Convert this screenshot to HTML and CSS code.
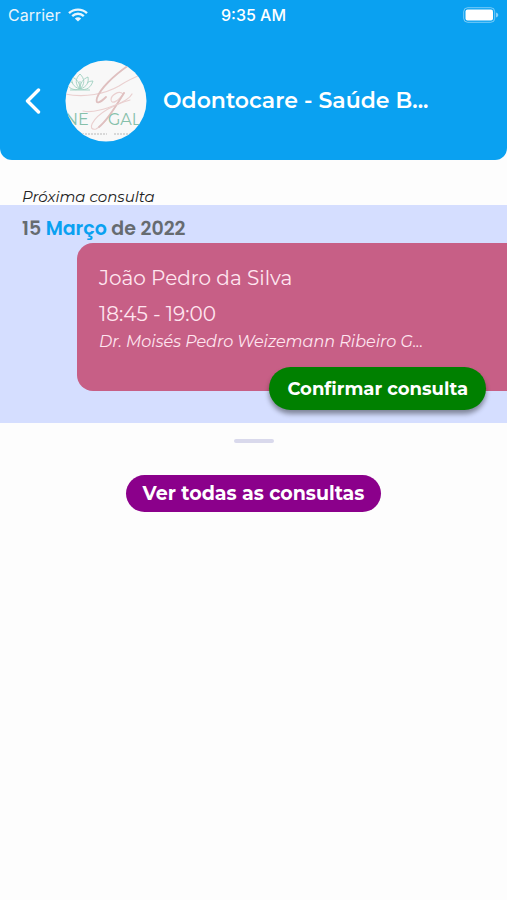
FILE: index.html
```html
<!DOCTYPE html>
<html lang="pt-BR">
<head>
    <meta charset="UTF-8">
    <meta name="viewport" content="width=device-width, initial-scale=1.0">
    <title>Odontocare</title>
    <link rel="stylesheet" href="styles.css">
</head>
<body>
    <header class="header">
        <div class="status-bar">
            <div class="carrier">
                <span>Carrier</span>
                <svg class="wifi" width="20" height="14" viewBox="0 0 20 14" aria-hidden="true">
                    <path d="M1 5.2C6 .4 14 .4 19 5.2" />
                    <path d="M4.2 8.2C7.6 5 12.4 5 15.8 8.2" />
                    <path class="wifi-dot" d="M10 13.6L6.8 10.4C8.6 8.8 11.4 8.8 13.2 10.4Z" />
                </svg>
            </div>
            <span class="clock">9:35 AM</span>
            <svg class="battery" width="36" height="16" viewBox="0 0 36 16" aria-hidden="true">
                <rect class="battery-case" x=".7" y=".7" width="31" height="14.6" rx="4" />
                <rect x="2.5" y="2.5" width="27.5" height="11" rx="2" fill="#fff" />
                <path d="M33 5.5C36 6.5 36 9.5 33 10.5Z" fill="#fff" opacity=".5" />
            </svg>
        </div>
        <div class="clinic">
            <button class="back" type="button" aria-label="Voltar">
                <svg width="16" height="26" viewBox="0 0 16 26"><path d="M13.5 2L2.5 13L13.5 24" /></svg>
            </button>
            <!-- Logo da clínica -->
            <svg class="logo" width="82" height="82" viewBox="0 0 82 82" aria-hidden="true">
                <defs>
                    <clipPath id="circulo"><circle cx="41" cy="41" r="40.5" /></clipPath>
                </defs>
                <g clip-path="url(#circulo)">
                    <rect width="82" height="82" fill="#f8f8f8" />
                    <g class="lotus">
                        <path d="M15 29C10 24 10 19 15 14C20 19 20 24 15 29Z" />
                        <path d="M15 29C8 27 6 22 7 17C12 19 15 23 15 29C15 23 18 19 23 17C24 22 22 27 15 29Z" />
                        <path d="M15 29C8 31 3 28 1 22C4 21 6 22 8 23M15 29C22 31 26 27 28 21C25 21 23 22 22 23" />
                        <path d="M15 21V29M5 30H25" />
                    </g>
                    <g class="script">
                        <path d="M0 34C20 38 40 34 54 26C63 20 70 17 78 14" />
                        <path d="M64 5C48 16 35 29 32 38C30 45 35 43 41 37" class="stroke-thick" />
                        <path d="M58 34C54 30 46 35 46 40C47 45 53 41 59 33" />
                        <path d="M59 33C51 45 42 63 31 69C22 71 26 59 43 49C55 43 64 40 67 34" />
                        <path d="M59 33C51 46 43 60 34 67" class="stroke-thick" />
                        <path d="M18 51C32 54 51 44 65 40" />
                    </g>
                    <text class="logo-name" x="0" y="65">NE</text>
                    <text class="logo-name" x="43" y="65">GAL</text>
                    <path class="tagline" d="M17 74H42M49 74H65" />
                </g>
            </svg>
            <h1 class="clinic-name">Odontocare - Saúde B...</h1>
        </div>
    </header>

    <main class="content">
        <p class="section-label">Próxima consulta</p>
        <section class="next">
            <h2 class="date">15 <span class="month">Março</span> de 2022</h2>
            <div class="card">
                <p class="patient">João Pedro da Silva</p>
                <p class="time">18:45 - 19:00</p>
                <p class="doctor">Dr. Moisés Pedro Weizemann Ribeiro G...</p>
            </div>
            <button class="confirm" type="button">Confirmar consulta</button>
        </section>
        <div class="handle"></div>
        <button class="see-all" type="button">Ver todas as consultas</button>
    </main>
</body>
</html>
```

FILE: styles.css
```css
* {
    box-sizing: border-box;
}
body {
    margin: 0;
    background-color: #fdfdfd;
    font-family: Montserrat, Inter, sans-serif;
}
h1, h2, p {
    margin: 0;
}
button {
    border: none;
    font-family: inherit;
    color: white;
    cursor: pointer;
}
.header {
    background-color: #0aa1f1;
    color: white;
    border-radius: 0 0 12px 12px;
    padding-bottom: 18px;
}
.status-bar {
    display: grid;
    grid-template-columns: 1fr auto 1fr;
    align-items: center;
    height: 30px;
    padding: 0 8px;
    font-family: Inter, sans-serif;
    font-size: 16px;
}
.carrier {
    display: flex;
    align-items: center;
    gap: 8px;
    opacity: 0.9;
}
.clock {
    font-weight: 500;
}
.wifi path {
    fill: none;
    stroke: white;
    stroke-width: 2.4;
}
.wifi .wifi-dot {
    fill: white;
    stroke: none;
}
.battery {
    justify-self: end;
}
.battery-case {
    fill: none;
    stroke: white;
    stroke-opacity: 0.45;
}
.clinic {
    display: flex;
    align-items: center;
    padding: 30px 25px 0;
}
.back {
    display: flex;
    padding: 0;
    margin-right: 24px;
    background: none;
}
.back path {
    fill: none;
    stroke: white;
    stroke-width: 3.4;
    stroke-linecap: round;
    stroke-linejoin: round;
}
.logo {
    flex-shrink: 0;
    margin-right: 16px;
}
.lotus {
    fill: none;
    stroke: #9fd0c1;
    stroke-width: 0.9;
}
.script {
    fill: none;
    stroke: #ead0d0;
    stroke-width: 1.2;
    stroke-linecap: round;
}
.stroke-thick {
    stroke: #dfc0c0;
    stroke-width: 1.8;
}
.logo-name {
    font-family: Montserrat, Lato, sans-serif;
    font-size: 16px;
    fill: #86c0aa;
}
.tagline {
    stroke: #d8d8d8;
    stroke-width: 2;
    stroke-dasharray: 2 1;
}
.clinic-name {
    font-size: 22px;
    line-height: 28px;
    font-weight: 600;
    white-space: nowrap;
}
.content {
    display: flex;
    flex-direction: column;
    align-items: center;
}
.section-label {
    align-self: stretch;
    padding: 28px 22px 0;
    font-size: 15px;
    line-height: 17px;
    font-style: italic;
    color: #222;
}
.next {
    align-self: stretch;
    display: flex;
    flex-direction: column;
    padding: 10px 0 13px;
    background-color: #d5deff;
}
.date {
    padding-left: 22px;
    font-family: Poppins, Montserrat, sans-serif;
    font-size: 19px;
    line-height: 28px;
    font-weight: 600;
    color: #666b70;
}
.month {
    color: #0aa1f1;
}
.card {
    margin-left: 77px;
    height: 148px;
    padding: 21px 22px;
    border-radius: 16px 0 0 16px;
    background-color: #c75f86;
    color: #ffe6f0;
}
.patient, .time {
    font-size: 20px;
    line-height: 28px;
}
.time {
    margin-top: 8px;
}
.doctor {
    font-size: 16px;
    line-height: 28px;
    font-style: italic;
}
.confirm {
    align-self: flex-end;
    height: 43px;
    margin: -24px 21px 0 0;
    padding: 0 18px;
    border-radius: 22px;
    background-color: #008000;
    box-shadow: 0 4px 5px rgba(0, 0, 0, 0.4);
    font-size: 18px;
    font-weight: 700;
}
.handle {
    width: 40px;
    height: 4px;
    margin: 16px 0 32px;
    border-radius: 2px;
    background-color: #d9d9ec;
}
.see-all {
    height: 37px;
    padding: 0 17px;
    border-radius: 19px;
    background-color: #8b008b;
    font-size: 19px;
    font-weight: 700;
}
```
